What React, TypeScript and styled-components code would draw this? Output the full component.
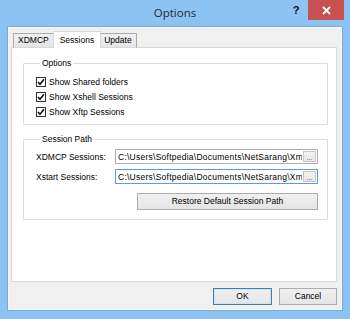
import styled, { createGlobalStyle } from "styled-components";

const GlobalStyle = createGlobalStyle`
  html, body {
    margin: 0;
    padding: 0;
    background: #ffffff;
  }
  body {
    font-family: "Liberation Sans", Arial, sans-serif;
    font-size: 8.5px;
    color: #000;
  }
  * {
    box-sizing: border-box;
  }
`;

const Window = styled.div`
  width: 350px;
  height: 319px;
  background: #8cc3f2;
  display: flex;
  flex-direction: column;
  padding: 0 7px 8px 7px;
`;

const TitleBar = styled.div`
  height: 26px;
  margin: 0 -7px;
  display: grid;
  grid-template-columns: 1fr auto 1fr;
`;

const Title = styled.div`
  font-family: "Open Sans", "Noto Sans", sans-serif;
  font-size: 11.5px;
  color: #2a2a2a;
  line-height: 26px;
  padding-bottom: 1px;
`;

const Controls = styled.div`
  display: flex;
  justify-content: flex-end;
  align-items: flex-start;
  padding-right: 6px;
`;

const HelpButton = styled.div`
  width: 24px;
  height: 20px;
  display: flex;
  align-items: center;
  justify-content: center;
  font-family: "Liberation Sans", Arial, sans-serif;
  font-weight: bold;
  font-size: 11px;
  color: #111;
`;

const CloseButton = styled.div`
  width: 36px;
  height: 20px;
  background: #c75050;
  display: flex;
  align-items: center;
  justify-content: center;
`;

const Client = styled.div`
  flex: 1;
  background: #f0f0f0;
  border: 1px solid #7eaad6;
  box-shadow: inset 0 0 0 1px #f7f7f7;
  display: flex;
  flex-direction: column;
  padding: 4px 5px 0 3px;
`;

const TabStrip = styled.div`
  display: flex;
  align-items: flex-end;
  height: 17px;
  padding-left: 2px;
  position: relative;
  z-index: 1;
  margin-bottom: -1px;
`;

const Tab = styled.div<{ $active?: boolean }>`
  height: ${(p) => (p.$active ? "17px" : "15px")};
  padding: 0 ${(p) => (p.$active ? "6px" : "4px")};
  margin: 0 ${(p) => (p.$active ? "-1px" : "0")};
  border: 1px solid ${(p) => (p.$active ? "#d9d9d9" : "#acacac")};
  border-bottom: ${(p) => (p.$active ? "none" : "1px solid #d9d9d9")};
  background: ${(p) =>
    p.$active ? "#ffffff" : "linear-gradient(#f0f0f0, #e5e5e5)"};
  display: flex;
  align-items: center;
  justify-content: center;
  line-height: 1;
  z-index: ${(p) => (p.$active ? 2 : 1)};
  & + & {
    margin-left: -1px;
  }
`;

const TabPanel = styled.div`
  flex: 1;
  background: #ffffff;
  border: 1px solid #d9d9d9;
  padding: 10px 8px 0 11px;
  display: flex;
  flex-direction: column;
`;

const Group = styled.fieldset<{ $gap?: number }>`
  margin: ${(p) => p.$gap ?? 0}px 0 0 0;
  border: 1px solid #dcdcdc;
  border-radius: 1px;
  padding: 0 9px 0 12px;
  min-inline-size: 0;
`;

const Legend = styled.legend`
  margin-left: 4px;
  padding: 0 2px;
  line-height: 10px;
  height: 10px;
`;

const CheckList = styled.div`
  display: flex;
  flex-direction: column;
  padding: 6px 0 5px;
`;

const CheckRow = styled.label`
  height: 15px;
  display: flex;
  align-items: center;
  gap: 3px;
`;

const CheckBox = styled.span`
  width: 10px;
  height: 10px;
  border: 1px solid #333333;
  background: #ffffff;
  display: flex;
  align-items: center;
  justify-content: center;
`;

const PathList = styled.div`
  display: flex;
  flex-direction: column;
  gap: 5px;
  padding: 5px 0 9px;
`;

const PathRow = styled.div`
  display: flex;
  align-items: center;
  height: 15px;
`;

const PathLabel = styled.span`
  width: 79px;
  flex-shrink: 0;
`;

const PathInput = styled.div<{ $focused?: boolean }>`
  flex: 1;
  height: 15px;
  border: 1px solid ${(p) => (p.$focused ? "#569de5" : "#abadb3")};
  background: #ffffff;
  display: flex;
  align-items: center;
  min-width: 0;
`;

const PathText = styled.span`
  flex: 1;
  overflow: hidden;
  white-space: nowrap;
  padding-left: 2px;
  min-width: 0;
  letter-spacing: 0.25px;
`;

const BrowseButton = styled.span`
  width: 13px;
  height: 11px;
  margin: 0 1px;
  flex-shrink: 0;
  border: 1px solid #c8c8c8;
  background: linear-gradient(#f2f2f2, #e6e6e6);
  display: flex;
  align-items: flex-end;
  justify-content: center;
  font-size: 7px;
  line-height: 7px;
  color: #444;
`;

const RestoreRow = styled.div`
  display: flex;
  justify-content: flex-end;
  margin-top: 4px;
`;

const Button = styled.div<{ $default?: boolean; $width: number }>`
  width: ${(p) => p.$width}px;
  height: 17px;
  border: 1px solid ${(p) => (p.$default ? "#3c7fb1" : "#acacac")};
  box-shadow: ${(p) => (p.$default ? "inset 0 0 0 1px #cde3f6" : "none")};
  background: linear-gradient(#f0f0f0, #e5e5e5);
  display: flex;
  align-items: center;
  justify-content: center;
  line-height: 1;
`;

const Footer = styled.div`
  display: flex;
  justify-content: flex-end;
  gap: 7px;
  padding: 6px 0 5px;
`;

const Check = () => (
  <svg width="8" height="8" viewBox="0 0 8 8">
    <path d="M1 4 L3 6.2 L7 1.2" fill="none" stroke="#111" strokeWidth="1.6" />
  </svg>
);

const options = ["Show Shared folders", "Show Xshell Sessions", "Show Xftp Sessions"];

const paths = [
  { label: "XDMCP Sessions:", focused: false },
  { label: "Xstart Sessions:", focused: true },
];

export default function App() {
  return (
    <>
      <GlobalStyle />
      <Window>
        <TitleBar>
          <div />
          <Title>Options</Title>
          <Controls>
            <HelpButton>?</HelpButton>
            <CloseButton>
              <svg width="9" height="9" viewBox="0 0 9 9">
                <path d="M1 1 L8 8 M8 1 L1 8" stroke="#fff" strokeWidth="1.8" />
              </svg>
            </CloseButton>
          </Controls>
        </TitleBar>
        <Client>
          <TabStrip>
            <Tab>XDMCP</Tab>
            <Tab $active>Sessions</Tab>
            <Tab>Update</Tab>
          </TabStrip>
          <TabPanel>
            <Group>
              <Legend>Options</Legend>
              <CheckList>
                {options.map((o) => (
                  <CheckRow key={o}>
                    <CheckBox>
                      <Check />
                    </CheckBox>
                    {o}
                  </CheckRow>
                ))}
              </CheckList>
            </Group>
            <Group $gap={9}>
              <Legend>Session Path</Legend>
              <PathList>
                {paths.map((p) => (
                  <PathRow key={p.label}>
                    <PathLabel>{p.label}</PathLabel>
                    <PathInput $focused={p.focused}>
                      <PathText>
                        C:\Users\Softpedia\Documents\NetSarang\Xmanager\Sessions
                      </PathText>
                      <BrowseButton>...</BrowseButton>
                    </PathInput>
                  </PathRow>
                ))}
                <RestoreRow>
                  <Button $width={181}>Restore Default Session Path</Button>
                </RestoreRow>
              </PathList>
            </Group>
          </TabPanel>
          <Footer>
            <Button $default $width={59}>
              OK
            </Button>
            <Button $width={58}>Cancel</Button>
          </Footer>
        </Client>
      </Window>
    </>
  );
}
